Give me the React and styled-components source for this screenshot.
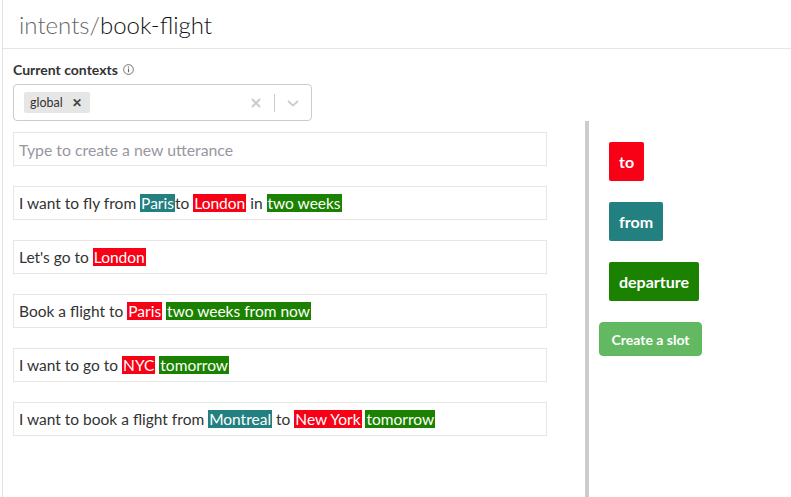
import React from "react"
import styled, { createGlobalStyle } from "styled-components"

const GlobalStyle = createGlobalStyle`
  html, body {
    margin: 0;
    padding: 0;
    background: #fff;
  }

  body {
    font-family: Lato, "Open Sans", "Liberation Sans", sans-serif;
    color: #333;
  }
`

const colors = {
  to: "#f80016",
  from: "#228080",
  departure: "#1a8200",
}

const utterances = [
  [
    "I want to fly from ",
    { slot: "from", text: "Paris" },
    "to ",
    { slot: "to", text: "London" },
    " in ",
    { slot: "departure", text: "two weeks" },
  ],
  ["Let's go to ", { slot: "to", text: "London" }],
  [
    "Book a flight to ",
    { slot: "to", text: "Paris" },
    " ",
    { slot: "departure", text: "two weeks from now" },
  ],
  [
    "I want to go to ",
    { slot: "to", text: "NYC" },
    " ",
    { slot: "departure", text: "tomorrow" },
  ],
  [
    "I want to book a flight from ",
    { slot: "from", text: "Montreal" },
    " to ",
    { slot: "to", text: "New York" },
    " ",
    { slot: "departure", text: "tomorrow" },
  ],
]

const Page = styled.div`
  margin-left: 2px;
  min-height: 497px;
  border-left: 1px solid #e2e2e2;
  display: flex;
  flex-direction: column;
`

const Header = styled.header`
  height: 48px;
  display: flex;
  align-items: center;
  padding-left: 16px;
  border-bottom: 1px solid #e6e6e6;
  font-size: 24px;
  font-weight: 300;
  color: #111;
`

const Crumb = styled.span`
  color: #666;
`

const Body = styled.div`
  flex: 1;
  display: flex;
  flex-direction: column;
  padding: 11px 0 0 10px;
`

const Label = styled.div`
  display: flex;
  align-items: center;
  gap: 5px;
  font-size: 14px;
  font-weight: 700;
  color: #333;
  height: 18px;
`

const Select = styled.div`
  margin-top: 6px;
  box-sizing: border-box;
  width: 299px;
  height: 37px;
  border: 1px solid #ccc;
  border-radius: 4px;
  display: flex;
  align-items: center;
  padding-left: 10px;
`

const Chip = styled.div`
  display: flex;
  align-items: center;
  height: 21px;
  background: #e6e6e6;
  border-radius: 2px;
  padding: 0 8px 0 6px;
  gap: 9px;
  font-size: 12.5px;
  color: #333;
`

const ChipClose = styled.span`
  font-size: 12px;
  font-weight: 700;
  color: #444;
`

const Indicators = styled.div`
  margin-left: auto;
  display: flex;
  align-items: center;
  height: 100%;
`

const Indicator = styled.div`
  width: 36px;
  display: flex;
  justify-content: center;
  color: #ccc;
`

const Separator = styled.span`
  width: 1px;
  height: 18px;
  background: #ccc;
`

const Columns = styled.div`
  flex: 1;
  display: flex;
`

const Utterances = styled.div`
  width: 534px;
  margin-right: 38px;
  padding-top: 11px;
  display: flex;
  flex-direction: column;
  gap: 20px;
`

const Row = styled.div`
  height: 34px;
  box-sizing: border-box;
  border: 1px solid #e6e6e6;
  display: flex;
  align-items: center;
  padding-left: 5px;
  font-size: ${p => (p.$placeholder ? "15.8px" : "15.5px")};
  color: ${p => (p.$placeholder ? "#97979f" : "#333")};
`

const Text = styled.span`
  white-space: pre;
`

const Entity = styled.span`
  padding: 0 1px;
  background: ${p => colors[p.$slot]};
  color: #fff;
`

const Slots = styled.aside`
  border-left: 4px solid #ccc;
  padding: 21px 0 0 10px;
  display: flex;
  flex-direction: column;
  align-items: flex-start;
  gap: 21px;
`

const Slot = styled.div`
  margin-left: 10px;
  height: 39px;
  display: flex;
  align-items: center;
  padding: 0 10px;
  border-radius: 2px;
  background: ${p => colors[p.$slot]};
  color: #fff;
  font-size: 16px;
  font-weight: 700;
`

const CreateButton = styled.button`
  height: 34px;
  width: 103px;
  border: 1px solid #5cb85c;
  border-radius: 4px;
  background: #62b962;
  color: #fff;
  font-family: inherit;
  font-size: 14px;
  font-weight: 700;
  padding: 0;
`

const InfoIcon = () => (
  <svg width="11" height="11" viewBox="0 0 12 12">
    <circle cx="6" cy="6" r="5.3" fill="none" stroke="#666" strokeWidth="1" />
    <rect x="5.4" y="5" width="1.2" height="4" fill="#666" />
    <rect x="5.4" y="2.8" width="1.2" height="1.2" fill="#666" />
  </svg>
)

const App = () => (
  <Page>
    <GlobalStyle />
    <Header>
      <Crumb>intents/</Crumb>book-flight
    </Header>
    <Body>
      <Label>
        Current contexts <InfoIcon />
      </Label>
      <Select>
        <Chip>
          global <ChipClose>✕</ChipClose>
        </Chip>
        <Indicators>
          <Indicator>
            <svg width="12" height="12" viewBox="0 0 12 12">
              <path d="M2 2 L10 10 M10 2 L2 10" stroke="currentColor" strokeWidth="2" />
            </svg>
          </Indicator>
          <Separator />
          <Indicator>
            <svg width="14" height="10" viewBox="0 0 14 10">
              <path d="M2 3 L7 7.5 L12 3" fill="none" stroke="currentColor" strokeWidth="1.8" />
            </svg>
          </Indicator>
        </Indicators>
      </Select>
      <Columns>
        <Utterances>
          <Row $placeholder>
            <Text>Type to create a new utterance</Text>
          </Row>
          {utterances.map((parts, i) => (
            <Row key={i}>
              <Text>
                {parts.map((part, j) =>
                  typeof part === "string" ? (
                    part
                  ) : (
                    <Entity key={j} $slot={part.slot}>
                      {part.text}
                    </Entity>
                  )
                )}
              </Text>
            </Row>
          ))}
        </Utterances>
        <Slots>
          {Object.keys(colors).map(slot => (
            <Slot key={slot} $slot={slot}>
              {slot}
            </Slot>
          ))}
          <CreateButton>Create a slot</CreateButton>
        </Slots>
      </Columns>
    </Body>
  </Page>
)

export default App
